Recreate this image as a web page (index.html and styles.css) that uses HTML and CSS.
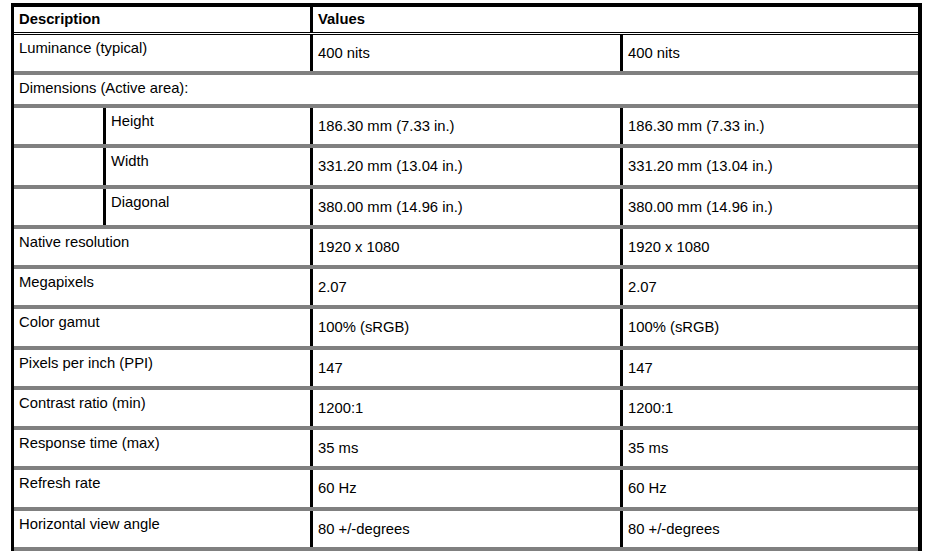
FILE: index.html
```html
<!DOCTYPE html>
<html lang="en">
<head>
<meta charset="utf-8">
<title>Display specifications</title>
<link rel="stylesheet" href="styles.css">
</head>
<body>
<div class="spec" role="table">
  <div class="row head" role="row">
    <div class="cell span2 bold">Description</div>
    <div class="cell span2 bold div">Values</div>
  </div>
  <div class="row lum" role="row">
    <div class="cell span2">Luminance (typical)</div>
    <div class="cell val div">400 nits</div>
    <div class="cell val div">400 nits</div>
  </div>
  <div class="row group" role="row">
    <div class="cell all">Dimensions (Active area):</div>
  </div>
  <div class="row" role="row">
    <div class="cell"></div>
    <div class="cell div">Height</div>
    <div class="cell val div">186.30 mm (7.33 in.)</div>
    <div class="cell val div">186.30 mm (7.33 in.)</div>
  </div>
  <div class="row" role="row">
    <div class="cell"></div>
    <div class="cell div">Width</div>
    <div class="cell val div">331.20 mm (13.04 in.)</div>
    <div class="cell val div">331.20 mm (13.04 in.)</div>
  </div>
  <div class="row" role="row">
    <div class="cell"></div>
    <div class="cell div">Diagonal</div>
    <div class="cell val div">380.00 mm (14.96 in.)</div>
    <div class="cell val div">380.00 mm (14.96 in.)</div>
  </div>
  <div class="row" role="row">
    <div class="cell span2">Native resolution</div>
    <div class="cell val div">1920 x 1080</div>
    <div class="cell val div">1920 x 1080</div>
  </div>
  <div class="row" role="row">
    <div class="cell span2">Megapixels</div>
    <div class="cell val div">2.07</div>
    <div class="cell val div">2.07</div>
  </div>
  <div class="row" role="row">
    <div class="cell span2">Color gamut</div>
    <div class="cell val div">100% (sRGB)</div>
    <div class="cell val div">100% (sRGB)</div>
  </div>
  <div class="row" role="row">
    <div class="cell span2">Pixels per inch (PPI)</div>
    <div class="cell val div">147</div>
    <div class="cell val div">147</div>
  </div>
  <div class="row" role="row">
    <div class="cell span2">Contrast ratio (min)</div>
    <div class="cell val div">1200:1</div>
    <div class="cell val div">1200:1</div>
  </div>
  <div class="row" role="row">
    <div class="cell span2">Response time (max)</div>
    <div class="cell val div">35 ms</div>
    <div class="cell val div">35 ms</div>
  </div>
  <div class="row" role="row">
    <div class="cell span2">Refresh rate</div>
    <div class="cell val div">60 Hz</div>
    <div class="cell val div">60 Hz</div>
  </div>
  <div class="row" role="row">
    <div class="cell span2">Horizontal view angle</div>
    <div class="cell val div">80 +/-degrees</div>
    <div class="cell val div">80 +/-degrees</div>
  </div>
  <div class="row" role="row" aria-hidden="true">
    <div class="cell span2"></div>
    <div class="cell val div"></div>
    <div class="cell val div"></div>
  </div>
</div>
</body>
</html>
```
FILE: styles.css
```css
html, body {
  margin: 0;
  padding: 0;
  background: #fff;
  overflow: hidden;
}

body {
  font-family: "Liberation Sans", Arial, sans-serif;
  font-size: 14.8px;
  line-height: 17px;
  color: #000;
}

.spec {
  margin: 3px 0 0 11px;
  width: 911px;
  box-sizing: border-box;
  border-style: solid;
  border-color: #000;
  border-width: 4px 4px 0 3px;
}

.row {
  display: grid;
  grid-template-columns: 89px 207px 310px 298px;
  box-sizing: border-box;
  height: 40.27px;
  border-bottom: 4px solid #808080;
}

.row.head {
  height: 28px;
  border-bottom: 3px double #000;
}

.row.lum {
  height: 40px;
}

.row.group {
  height: 33px;
}

.cell {
  padding: 5px 0 0 5px;
  white-space: nowrap;
}

.cell.val {
  padding-top: 10px;
}

.row.head .cell {
  padding-top: 4px;
}

.cell.div {
  border-left: 3px solid #000;
}

.span2 {
  grid-column: span 2;
}

.all {
  grid-column: 1 / -1;
}

.bold {
  font-weight: bold;
}
```
